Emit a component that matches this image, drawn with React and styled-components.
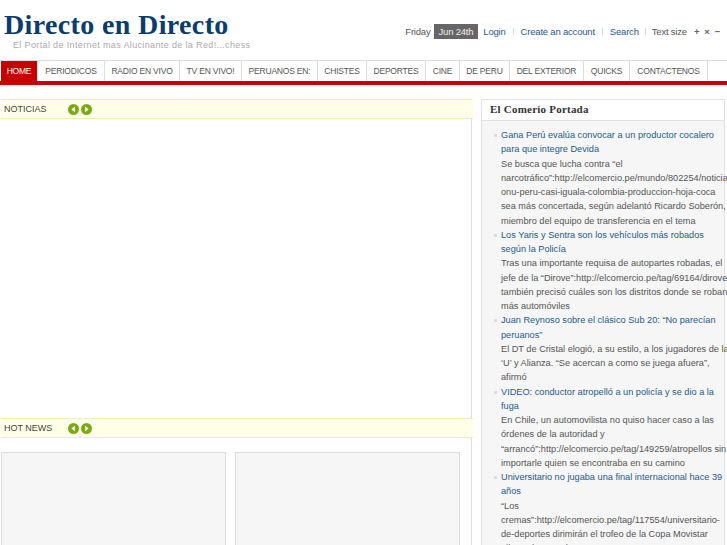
import React from "react";
import styled, { createGlobalStyle } from "styled-components";

const Global = createGlobalStyle`
  html, body { margin: 0; padding: 0; background: #fff; overflow: hidden; }
  #root { width: 727px; height: 545px; overflow: hidden; }
  * { box-sizing: border-box; }
`;

const Page = styled.div`
  width: 727px;
  height: 545px;
  overflow: hidden;
  font-family: "Liberation Sans", Arial, sans-serif;
  font-size: 10px;
  color: #555;
`;

const Header = styled.header`
  display: flex;
  justify-content: space-between;
  height: 60px;
`;

const Brand = styled.div`
  padding: 10px 0 0 4px;
`;

const Title = styled.h1`
  margin: 0;
  font-family: "Liberation Serif", "Times New Roman", serif;
  font-size: 28px;
  line-height: 30px;
  font-weight: 700;
  letter-spacing: 0.36px;
  color: #0a3d6e;
  white-space: nowrap;
`;

const Slogan = styled.div`
  margin: 0 0 0 9px;
  font-size: 9px;
  line-height: 11px;
  letter-spacing: 0.36px;
  color: #aaa;
  white-space: nowrap;
`;

const TopBar = styled.div`
  display: flex;
  align-items: center;
  height: 17px;
  margin-top: 23px;
  padding-right: 7px;
  font-size: 9.5px;
  letter-spacing: -0.2px;
  white-space: nowrap;
`;

const DateLabel = styled.span`
  margin-right: 3px;
`;

const DateBadge = styled.span`
  background: #666;
  color: #eee;
  padding: 0 5px;
  line-height: 15px;
  margin-right: 5px;
`;

const TopLink = styled.a`
  color: #1f5a8c;
`;

const Sep = styled.span`
  width: 1px;
  height: 7px;
  margin: 0 ${(p) => p.$gap || 7}px;
  background: #ddd;
`;

const Zoomer = styled.span`
  margin-left: 7px;
  display: flex;
  gap: 5px;
  color: #666;
  font-weight: 700;
`;

const Nav = styled.nav`
  display: flex;
  height: 25px;
  border-top: 1px solid #ddd;
  border-bottom: 4px solid #c70000;
  padding-left: 1px;
  overflow: hidden;
`;

const NavItem = styled.a`
  display: block;
  flex: none;
  width: ${(p) => p.$w}px;
  text-align: center;
  line-height: 20px;
  font-size: 8.5px;
  letter-spacing: -0.2px;
  color: ${(p) => (p.$active ? "#fff" : "#555")};
  background: ${(p) => (p.$active ? "#c70000" : "#fff")};
  border-right: 1px solid #ddd;
  white-space: nowrap;
`;

const Body = styled.div`
  display: flex;
  padding-top: 14px;
`;

const MainCol = styled.main`
  width: 472px;
  flex: none;
`;

const SectionBar = styled.div`
  display: flex;
  align-items: center;
  height: 20px;
  background: #ffffe8;
  border-top: 1px solid #eeeebb;
  border-bottom: 1px solid #eeeebb;
  padding-left: 3px;
  font-size: 9px;
  color: #444;
  margin: 0 -1px 0 1px;
`;

const BarTitle = styled.span`
  width: 64px;
`;

const Arrow = styled.svg`
  width: 11px;
  height: 11px;
  margin-right: 2px;
`;

const Slides = styled.div`
  height: 299px;
  border-right: 1px solid #ddd;
`;

const Cards = styled.div`
  display: flex;
  gap: 9px;
  padding: 14px 0 0 1px;
  height: 120px;
  border-right: 1px solid #ddd;
`;

const Card = styled.div`
  width: 225px;
  height: 200px;
  background: #f6f6f6;
  border: 1px solid #ddd;
`;

const Side = styled.aside`
  width: 244px;
  margin-left: 9px;
  flex: none;
  border: 1px solid #e2e2e2;
  background: #f6f6f6;
`;

const SideHead = styled.h3`
  margin: 0;
  height: 21px;
  padding-left: 8px;
  background: #fff;
  border-bottom: 1px solid #e2e2e2;
  font-family: "Liberation Serif", "Times New Roman", serif;
  font-size: 11px;
  line-height: 19px;
  font-weight: 700;
  letter-spacing: 0.22px;
  color: #333;
`;

const List = styled.ul`
  list-style: none;
  margin: 0;
  width: 247px;
  padding: 7px 0 0 19px;
  line-height: 14.25px;
  font-size: 9.2px;
`;

const Item = styled.li`
  position: relative;
  &::before {
    content: "";
    position: absolute;
    left: -7px;
    top: 6px;
    width: 3px;
    height: 3px;
    background: #d6dce1;
  }
`;

const ItemLink = styled.a`
  display: block;
  color: #1f5a8c;
`;

const ItemText = styled.span`
  display: block;
  color: #555;
`;

const ArrowIcon = ({ dir }) => (
  <Arrow viewBox="0 0 11 11">
    <circle cx="5.5" cy="5.5" r="5.5" fill="#7aab12" />
    <path d={dir === "l" ? "M6.8 2.8v5.4L3.4 5.5z" : "M4.2 2.8v5.4l3.4-2.7z"} fill="#fff" />
  </Arrow>
);

const navItems = [
  ["PERIODICOS", 67],
  ["RADIO EN VIVO", 75],
  ["TV EN VIVO!", 62],
  ["PERUANOS EN:", 76],
  ["CHISTES", 49],
  ["DEPORTES", 59],
  ["CINE", 34],
  ["DE PERU", 50],
  ["DEL EXTERIOR", 74],
  ["QUICKS", 46],
  ["CONTACTENOS", 78],
];

const news = [
  ["Gana Perú evalúa convocar a un productor cocalero para que integre Devida", "Se busca que lucha contra “el narcotráfico”:http://elcomercio.pe/mundo/802254/noticia-onu-peru-casi-iguala-colombia-produccion-hoja-coca sea más concertada, según adelantó Ricardo Soberón, miembro del equipo de transferencia en el tema"],
  ["Los Yaris y Sentra son los vehículos más robados según la Policía", "Tras una importante requisa de autopartes robadas, el jefe de la “Dirove”:http://elcomercio.pe/tag/69164/dirove también precisó cuáles son los distritos donde se roban más automóviles"],
  ["Juan Reynoso sobre el clásico Sub 20: “No parecían peruanos”", "El DT de Cristal elogió, a su estilo, a los jugadores de la ‘U’ y Alianza. “Se acercan a como se juega afuera”, afirmó"],
  ["VIDEO: conductor atropelló a un policía y se dio a la fuga", "En Chile, un automovilista no quiso hacer caso a las órdenes de la autoridad y “arrancó”:http://elcomercio.pe/tag/149259/atropellos sin importarle quien se encontraba en su camino"],
  ["Universitario no jugaba una final internacional hace 39 años", "“Los cremas”:http://elcomercio.pe/tag/117554/universitario-de-deportes dirimirán el trofeo de la Copa Movistar Libertadores Sub 20 ante Boca"],
];

export default function App() {
  return (
    <Page>
      <Global />
      <Header>
        <Brand>
          <Title>Directo en Directo</Title>
          <Slogan>El Portal de Internet mas Alucinante de la Red!...chess</Slogan>
        </Brand>
        <TopBar>
          <DateLabel>Friday</DateLabel>
          <DateBadge>Jun 24th</DateBadge>
          <TopLink>Login</TopLink>
          <Sep />
          <TopLink>Create an account</TopLink>
          <Sep />
          <TopLink>Search</TopLink>
          <Sep $gap={6} />
          <span>Text size</span>
          <Zoomer><span>+</span><span>×</span><span>−</span></Zoomer>
        </TopBar>
      </Header>
      <Nav>
        <NavItem $active $w={37}>HOME</NavItem>
        {navItems.map(([n, w]) => <NavItem key={n} $w={w}>{n}</NavItem>)}
      </Nav>
      <Body>
        <MainCol>
          <SectionBar>
            <BarTitle>NOTICIAS</BarTitle>
            <ArrowIcon dir="l" /><ArrowIcon dir="r" />
          </SectionBar>
          <Slides />
          <SectionBar>
            <BarTitle>HOT NEWS</BarTitle>
            <ArrowIcon dir="l" /><ArrowIcon dir="r" />
          </SectionBar>
          <Cards>
            <Card /><Card />
          </Cards>
        </MainCol>
        <Side>
          <SideHead>El Comerio Portada</SideHead>
          <List>
            {news.map(([t, d]) => (
              <Item key={t}>
                <ItemLink>{t}</ItemLink>
                <ItemText>{d}</ItemText>
              </Item>
            ))}
          </List>
        </Side>
      </Body>
    </Page>
  );
}
